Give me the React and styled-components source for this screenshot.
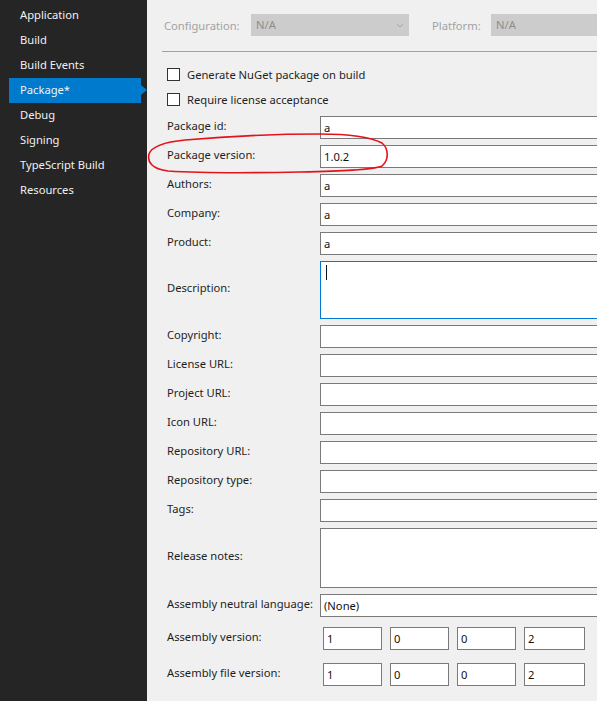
import React from 'react'
import styled, { createGlobalStyle } from 'styled-components'

const GlobalStyle = createGlobalStyle`
  html, body { margin: 0; padding: 0; overflow: hidden; }
  body { font-family: "Noto Sans", "Segoe UI", sans-serif; font-size: 11.2px; }
`

const navItems = ['Application', 'Build', 'Build Events', 'Package*', 'Debug', 'Signing', 'TypeScript Build', 'Resources']

const fields = [
  { label: 'Package id:', value: 'a' },
  { label: 'Package version:', value: '1.0.2' },
  { label: 'Authors:', value: 'a' },
  { label: 'Company:', value: 'a' },
  { label: 'Product:', value: 'a' },
  { label: 'Description:', value: '', tall: 58, focus: true },
  { label: 'Copyright:' },
  { label: 'License URL:' },
  { label: 'Project URL:' },
  { label: 'Icon URL:' },
  { label: 'Repository URL:' },
  { label: 'Repository type:' },
  { label: 'Tags:' },
  { label: 'Release notes:', tall: 60 },
  { label: 'Assembly neutral language:', value: '(None)' },
]

const App = () => {
  return (
    <Page>
      <GlobalStyle />
      <Sidebar>
        {navItems.map((n) => (
          <NavItem key={n} active={n === 'Package*'}>{n}</NavItem>
        ))}
      </Sidebar>
      <Main>
        <ConfigRow>
          <DimLabel w={87}>Configuration:</DimLabel>
          <Dropdown w={158}>
            N/A
            <Chevron viewBox="0 0 10 6"><path d="M1 1 L5 5 L9 1" /></Chevron>
          </Dropdown>
          <DimLabel w={59} style={{ marginLeft: 23 }}>Platform:</DimLabel>
          <Dropdown w={120}>N/A</Dropdown>
        </ConfigRow>
        <Separator />
        <CheckRow><Box />Generate NuGet package on build</CheckRow>
        <CheckRow><Box />Require license acceptance</CheckRow>
        <Form>
          {fields.map((f) => (
            <FieldRow key={f.label}>
              <Label>{f.label}</Label>
              <Input h={f.tall || 23} focus={f.focus} tall={!!f.tall}>
                {f.focus ? <Caret /> : f.value}
              </Input>
            </FieldRow>
          ))}
          <VersionRow top={10}>
            <Label>Assembly version:</Label>
            <Parts>
              {['1', '0', '0', '2'].map((v, i) => <Part key={i} last={i === 3}>{v}</Part>)}
            </Parts>
          </VersionRow>
          <VersionRow top={13}>
            <Label>Assembly file version:</Label>
            <Parts>
              {['1', '0', '0', '2'].map((v, i) => <Part key={i} last={i === 3}>{v}</Part>)}
            </Parts>
          </VersionRow>
        </Form>
      </Main>
      <Marker width="597" height="701" viewBox="0 0 597 701">
        <path d="M149 154 C152 146 165 142 185 140 C230 136 280 134 320 134 C350 134 372 138 382 143 C389 149 389 160 382 166 C372 170 340 171 300 172 C250 173 200 173 168 171 C152 169 147 162 149 154 Z" />
      </Marker>
    </Page>
  )
}

const Page = styled.div`
  position: relative;
  width: 597px;
  height: 701px;
  display: flex;
  background: #f0f0f0;
  overflow: hidden;
`
const Sidebar = styled.div`
  width: 147px;
  flex-shrink: 0;
  background: #252526;
  padding-top: 3px;
  box-sizing: border-box;
`
const NavItem = styled.div`
  position: relative;
  height: 25px;
  line-height: 24px;
  margin-left: 9px;
  margin-right: 6px;
  padding-left: 11px;
  color: #f1f1f1;
  background: ${(p) => (p.active ? '#007acc' : 'transparent')};
  ${(p) => p.active && `
    &::after {
      content: '';
      position: absolute;
      right: -6px;
      top: 7px;
      border-left: 6px solid #007acc;
      border-top: 5px solid transparent;
      border-bottom: 5px solid transparent;
    }
  `}
`
const Main = styled.div`
  flex: 1;
  padding-left: 15px;
  padding-top: 14px;
  min-width: 0;
`
const ConfigRow = styled.div`
  display: flex;
  align-items: center;
  height: 22px;
  padding-left: 2px;
`
const DimLabel = styled.span`
  color: #a2a2a2;
  width: ${(p) => p.w}px;
  flex-shrink: 0;
`
const Dropdown = styled.div`
  position: relative;
  width: ${(p) => p.w}px;
  flex-shrink: 0;
  height: 22px;
  line-height: 22px;
  background: #cccccc;
  color: #8d8d8d;
  padding-left: 5px;
  box-sizing: border-box;
`
const Chevron = styled.svg`
  position: absolute;
  right: 5px;
  top: 9px;
  width: 8px;
  height: 5px;
  fill: none;
  stroke: #9a9a9a;
  stroke-width: 1;
`
const Separator = styled.div`
  height: 1px;
  background: #a0a0a0;
  margin-top: 15px;
  margin-bottom: 16px;
`
const CheckRow = styled.div`
  display: flex;
  align-items: center;
  height: 13px;
  margin-left: 5px;
  margin-bottom: 12px;
  color: #1e1e1e;
`
const Box = styled.span`
  width: 11px;
  height: 11px;
  border: 1px solid #333;
  background: #fff;
  margin-right: 7px;
  flex-shrink: 0;
`
const Form = styled.div`
  margin-top: -2px;
  display: flex;
  flex-direction: column;
  gap: 6px;
`
const FieldRow = styled.div`
  display: flex;
  align-items: center;
`
const Label = styled.div`
  width: 158px;
  flex-shrink: 0;
  padding-left: 5px;
  box-sizing: border-box;
  color: #1e1e1e;
  white-space: nowrap;
  margin-top: -5px;
`
const Input = styled.div`
  flex: 1;
  height: ${(p) => p.h}px;
  line-height: ${(p) => (p.tall ? '20px' : '21px')};
  border: 1px solid ${(p) => (p.focus ? '#0078d7' : '#7a7a7a')};
  border-right: none;
  background: #fff;
  padding-left: 3px;
  box-sizing: border-box;
  color: #111;
  margin-right: -2px;
`
const Caret = styled.span`
  display: inline-block;
  width: 1px;
  height: 15px;
  background: #111;
  margin-top: 3px;
  margin-left: 2px;
  vertical-align: top;
`
const VersionRow = styled.div`
  display: flex;
  align-items: center;
  margin-top: ${(p) => p.top - 6}px;
`
const Parts = styled.div`
  display: flex;
  gap: 8px;
  margin-left: 3px;
`
const Part = styled.div`
  width: ${(p) => (p.last ? 61 : 59)}px;
  height: 23px;
  line-height: 21px;
  border: 1px solid #7a7a7a;
  background: #fff;
  box-sizing: border-box;
  padding-left: 3px;
  color: #111;
`
const Marker = styled.svg`
  position: absolute;
  left: 0;
  top: 0;
  pointer-events: none;
  fill: none;
  stroke: #e3121b;
  stroke-width: 1.6;
`

export default App
